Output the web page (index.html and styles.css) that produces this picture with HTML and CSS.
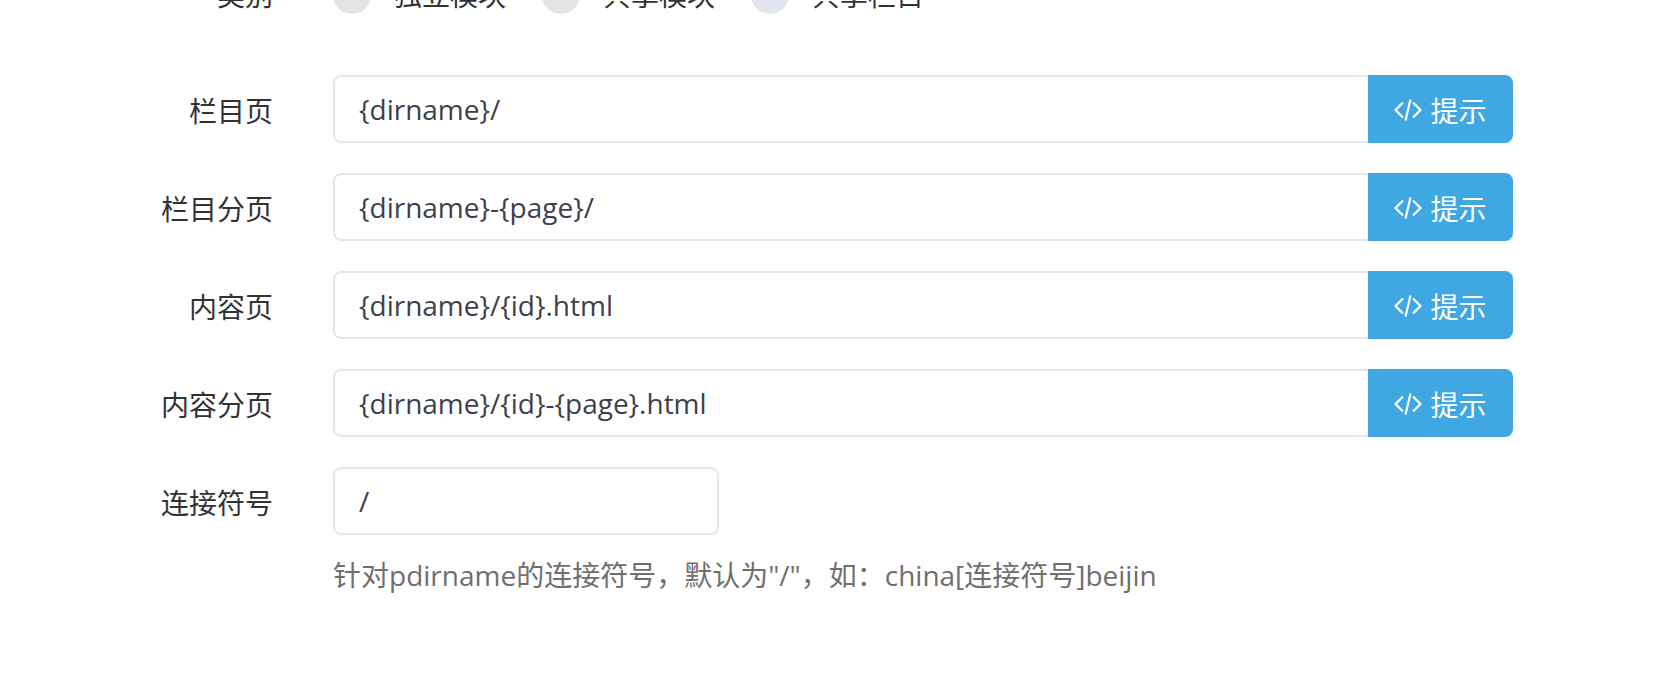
FILE: index.html
```html
<!DOCTYPE html>
<html lang="en">
<head>
  <meta charset="UTF-8" />
  <title>栏目规则</title>
  <link rel="stylesheet" href="styles.css">
</head>
<body>
  <form class="rule-form">
    <div class="row row-type">
      <label class="row-label">类别</label>
      <div class="radios">
        <span class="radio"><i class="dot"></i>独立模块</span>
        <span class="radio"><i class="dot"></i>共享模块</span>
        <span class="radio"><i class="dot dot-on"></i>共享栏目</span>
      </div>
    </div>

    <div class="row">
      <label class="row-label">栏目页</label>
      <div class="group">
        <div class="field">{dirname}/</div>
        <button type="button" class="tip"><svg class="tip-icon" viewBox="0 0 28 22"><path d="M9 3.5 1.5 11 9 18.5M19 3.5l7.5 7.5-7.5 7.5M16.5.5l-5 21"/></svg>提示</button>
      </div>
    </div>
    <div class="row">
      <label class="row-label">栏目分页</label>
      <div class="group">
        <div class="field">{dirname}-{page}/</div>
        <button type="button" class="tip"><svg class="tip-icon" viewBox="0 0 28 22"><path d="M9 3.5 1.5 11 9 18.5M19 3.5l7.5 7.5-7.5 7.5M16.5.5l-5 21"/></svg>提示</button>
      </div>
    </div>
    <div class="row">
      <label class="row-label">内容页</label>
      <div class="group">
        <div class="field">{dirname}/{id}.html</div>
        <button type="button" class="tip"><svg class="tip-icon" viewBox="0 0 28 22"><path d="M9 3.5 1.5 11 9 18.5M19 3.5l7.5 7.5-7.5 7.5M16.5.5l-5 21"/></svg>提示</button>
      </div>
    </div>
    <div class="row">
      <label class="row-label">内容分页</label>
      <div class="group">
        <div class="field">{dirname}/{id}-{page}.html</div>
        <button type="button" class="tip"><svg class="tip-icon" viewBox="0 0 28 22"><path d="M9 3.5 1.5 11 9 18.5M19 3.5l7.5 7.5-7.5 7.5M16.5.5l-5 21"/></svg>提示</button>
      </div>
    </div>
    <div class="row row-last">
      <label class="row-label">连接符号</label>
      <div class="small-col">
        <div class="field field-small">/</div>
        <p class="help">针对pdirname的连接符号，默认为"/"，如：china[连接符号]beijin</p>
      </div>
    </div>
  </form>
</body>
</html>
```

FILE: styles.css
```css
html, body {
  margin: 0;
  padding: 0;
  height: 100%;
  background: #fff;
  overflow: hidden;
}

body {
  font-family: "Open Sans", "Noto Sans CJK SC", sans-serif;
  font-size: 28px;
  color: #333;
}

.rule-form {
  margin-top: -24px;
  width: 1513px;
}

.row {
  display: flex;
  margin-bottom: 30px;
}

.row-type {
  height: 38px;
  margin-bottom: 61px;
}

.row-label {
  width: 273px;
  height: 68px;
  flex: none;
  text-align: right;
  line-height: 72px;
  margin-right: 60px;
}

.row-type .row-label {
  height: 38px;
  line-height: 38px;
}

.radios {
  display: flex;
  gap: 36px;
  line-height: 38px;
}

.radio {
  display: flex;
  align-items: center;
}

.dot {
  width: 38px;
  height: 38px;
  border-radius: 50%;
  background: #e4e4e4;
  margin-right: 23px;
}

.dot-on {
  background: #e2e5f0;
}

.group {
  flex: 1;
  display: flex;
}

.field {
  flex: 1;
  box-sizing: border-box;
  height: 68px;
  line-height: 64px;
  padding: 0 24px;
  border: 2px solid #e4e6f1;
  border-right: 0;
  border-radius: 8px 0 0 8px;
  color: #3f3f4a;
}

.tip {
  width: 145px;
  height: 68px;
  padding: 2px 0 0;
  border: 0;
  border-radius: 0 8px 8px 0;
  background: #3fa7e2;
  color: #fff;
  font: inherit;
  display: flex;
  align-items: center;
  justify-content: center;
}

.tip-icon {
  width: 28px;
  height: 22px;
  margin-right: 8px;
  fill: none;
  stroke: #fff;
  stroke-width: 2.2;
}

.small-col {
  flex: 1;
}

.field-small {
  flex: none;
  width: 386px;
  border-right: 2px solid #e4e6f1;
  border-radius: 8px;
}

.help {
  margin: 19px 0 0;
  color: #6f6f6f;
}
```
